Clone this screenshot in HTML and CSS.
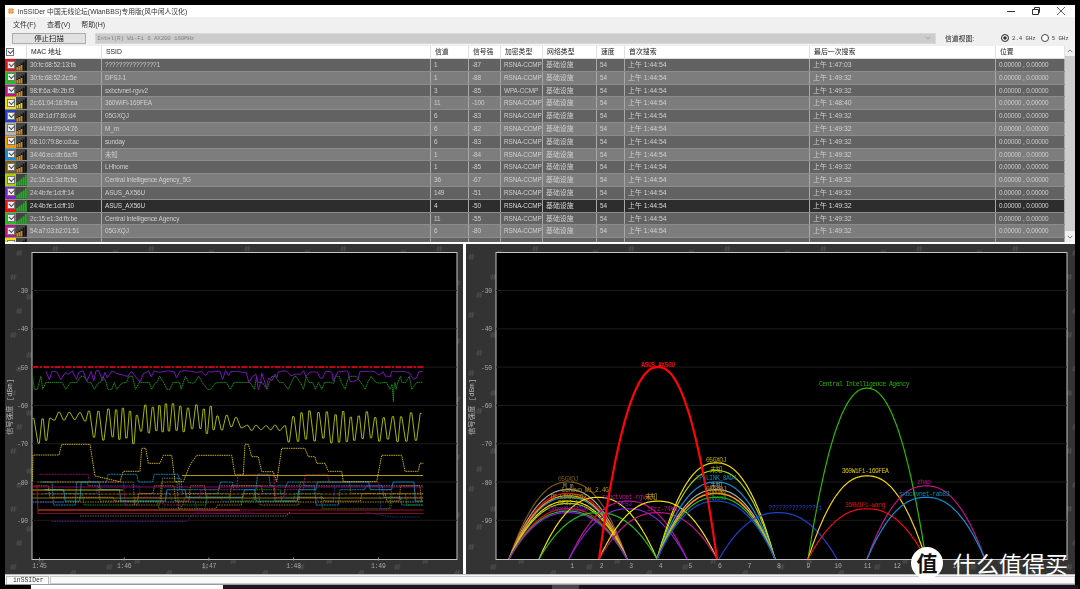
FILE: index.html
```html
<!DOCTYPE html>
<html lang="zh">
<head>
<meta charset="utf-8">
<title>inSSIDer</title>
<link rel="stylesheet" href="styles.css">
</head>
<body>
<svg class="defs" width="0" height="0" aria-hidden="true">
  <symbol id="sig" viewBox="0 0 10 11">
    <path d="M1 11V7M3 11V5.5M5 11V4M7 11V2.5M9 11V1" stroke="#111" stroke-width="1.6"/>
    <path d="M1 11V7.5M3 11V6.5M5 11V5.5" stroke="#d88a10" stroke-width="1.6"/>
  </symbol>
  <symbol id="sig-y" viewBox="0 0 10 11">
    <path d="M1 11V7M3 11V5.5M5 11V4M7 11V2.5M9 11V1" stroke="#111" stroke-width="1.6"/>
    <path d="M1 11V7.5M3 11V6.5M5 11V5.5" stroke="#e8d800" stroke-width="1.6"/>
  </symbol>
  <symbol id="sig-g" viewBox="0 0 10 11">
    <path d="M1 11V7.5M3 11V6M5 11V4.5M7 11V3M9 11V1" stroke="#12b812" stroke-width="1.6"/>
  </symbol>
</svg>

<div class="window">
  <header class="titlebar">
    <svg class="app-icon" viewBox="0 0 8 8"><path d="M2.5 0V8M5.5 0V8M0 2.5H8M0 5.5H8" stroke="#e8801a" stroke-width="1.3"/></svg>
    <span class="title">inSSIDer 中国无线论坛(WlanBBS)专用版(风中闲人汉化)</span>
    <div class="controls">
      <svg viewBox="0 0 10 10"><path d="M1 5.5H9" stroke="#333"/></svg>
      <svg viewBox="0 0 10 10"><path d="M1.5 3.5H7.5V8.5H1.5ZM3.5 3.5V1.5H8.5V6.5H7.5" fill="none" stroke="#333"/></svg>
      <svg viewBox="0 0 10 10"><path d="M1 1L9 9M9 1L1 9" stroke="#333" stroke-width=".8"/></svg>
    </div>
  </header>

  <nav class="menubar">
    <span>文件(F)</span><span>查看(V)</span><span>帮助(H)</span>
  </nav>

  <div class="toolbar">
    <button class="stop">停止扫描</button>
    <div class="select">
      <span>Intel(R) Wi-Fi 6 AX200 160MHz</span>
      <svg viewBox="0 0 8 5"><path d="M1 1L4 4L7 1" fill="none" stroke="#999"/></svg>
    </div>
    <span class="view-label">信道视图:</span>
    <label class="radio"><i class="dot on"></i>2.4 GHz</label>
    <label class="radio"><i class="dot"></i>5 GHz</label>
  </div>

  <section class="table">
    <div class="rows">
      <div class="row head">
        <span class="hcheck"><i class="cb light"></i></span><span></span>
        <span>MAC 地址</span><span>SSID</span><span>信道</span><span>信号强</span><span>加密类型</span><span>网络类型</span><span>速度</span><span>首次搜索</span><span>最后一次搜索</span><span>位置</span>
      </div>
      <div class="row odd"><span class="swatch red"><i class="cb"></i></span><svg class="sig"><use href="#sig"/></svg><span>30:fc:68:52:13:fa</span><span>???????????????1</span><span>1</span><span>-87</span><span>RSNA-CCMP</span><span>基础设施</span><span>54</span><span>上午 1:44:54</span><span>上午 1:47:03</span><span>0.00000 , 0.00000</span></div>
      <div class="row even"><span class="swatch green"><i class="cb"></i></span><svg class="sig"><use href="#sig"/></svg><span>30:fc:68:52:2c:5e</span><span>DFSJ-1</span><span>1</span><span>-88</span><span>RSNA-CCMP</span><span>基础设施</span><span>54</span><span>上午 1:44:54</span><span>上午 1:49:32</span><span>0.00000 , 0.00000</span></div>
      <div class="row odd"><span class="swatch magenta"><i class="cb"></i></span><svg class="sig"><use href="#sig"/></svg><span>98:ff:6a:4b:2b:f3</span><span>sxbctvnet-rgvv2</span><span>3</span><span>-85</span><span>WPA-CCMP</span><span>基础设施</span><span>54</span><span>上午 1:44:54</span><span>上午 1:49:32</span><span>0.00000 , 0.00000</span></div>
      <div class="row even"><span class="swatch yellow"><i class="cb"></i></span><svg class="sig"><use href="#sig-y"/></svg><span>2c:61:04:16:9f:ea</span><span>360WiFi-169FEA</span><span>11</span><span>-100</span><span>RSNA-CCMP</span><span>基础设施</span><span>54</span><span>上午 1:44:54</span><span>上午 1:48:40</span><span>0.00000 , 0.00000</span></div>
      <div class="row odd"><span class="swatch blue"><i class="cb"></i></span><svg class="sig"><use href="#sig"/></svg><span>80:8f:1d:f7:80:d4</span><span>05GXQJ</span><span>6</span><span>-83</span><span>RSNA-CCMP</span><span>基础设施</span><span>54</span><span>上午 1:44:54</span><span>上午 1:49:32</span><span>0.00000 , 0.00000</span></div>
      <div class="row even"><span class="swatch grey"><i class="cb"></i></span><svg class="sig"><use href="#sig"/></svg><span>78:44:fd:29:04:76</span><span>M_m</span><span>6</span><span>-82</span><span>RSNA-CCMP</span><span>基础设施</span><span>54</span><span>上午 1:44:54</span><span>上午 1:49:32</span><span>0.00000 , 0.00000</span></div>
      <div class="row odd"><span class="swatch orange"><i class="cb"></i></span><svg class="sig"><use href="#sig"/></svg><span>08:10:79:8e:cd:ac</span><span>sunday</span><span>6</span><span>-83</span><span>RSNA-CCMP</span><span>基础设施</span><span>54</span><span>上午 1:44:54</span><span>上午 1:49:32</span><span>0.00000 , 0.00000</span></div>
      <div class="row even"><span class="swatch cyan"><i class="cb"></i></span><svg class="sig"><use href="#sig"/></svg><span>34:46:ec:db:6a:f9</span><span>未知</span><span>1</span><span>-84</span><span>RSNA-CCMP</span><span>基础设施</span><span>54</span><span>上午 1:44:54</span><span>上午 1:49:32</span><span>0.00000 , 0.00000</span></div>
      <div class="row odd"><span class="swatch brown"><i class="cb"></i></span><svg class="sig"><use href="#sig"/></svg><span>34:46:ec:db:6a:f8</span><span>LHhome</span><span>1</span><span>-85</span><span>RSNA-CCMP</span><span>基础设施</span><span>54</span><span>上午 1:44:54</span><span>上午 1:49:32</span><span>0.00000 , 0.00000</span></div>
      <div class="row even"><span class="swatch lime"><i class="cb"></i></span><svg class="sig"><use href="#sig-g"/></svg><span>2c:15:e1:3d:fb:bc</span><span>Central Intelligence Agency_5G</span><span>36</span><span>-67</span><span>RSNA-CCMP</span><span>基础设施</span><span>54</span><span>上午 1:44:54</span><span>上午 1:49:32</span><span>0.00000 , 0.00000</span></div>
      <div class="row odd"><span class="swatch purple"><i class="cb"></i></span><svg class="sig"><use href="#sig-g"/></svg><span>24:4b:fe:1d:ff:14</span><span>ASUS_AX56U</span><span>149</span><span>-51</span><span>RSNA-CCMP</span><span>基础设施</span><span>54</span><span>上午 1:44:54</span><span>上午 1:49:32</span><span>0.00000 , 0.00000</span></div>
      <div class="row selected"><span class="swatch red"><i class="cb"></i></span><svg class="sig"><use href="#sig-g"/></svg><span>24:4b:fe:1d:ff:10</span><span>ASUS_AX56U</span><span>4</span><span>-50</span><span>RSNA-CCMP</span><span>基础设施</span><span>54</span><span>上午 1:44:54</span><span>上午 1:49:32</span><span>0.00000 , 0.00000</span></div>
      <div class="row odd"><span class="swatch green"><i class="cb"></i></span><svg class="sig"><use href="#sig-g"/></svg><span>2c:15:e1:3d:fb:be</span><span>Central Intelligence Agency</span><span>11</span><span>-55</span><span>RSNA-CCMP</span><span>基础设施</span><span>54</span><span>上午 1:44:54</span><span>上午 1:49:32</span><span>0.00000 , 0.00000</span></div>
      <div class="row even"><span class="swatch magenta"><i class="cb"></i></span><svg class="sig"><use href="#sig"/></svg><span>54:a7:03:b2:01:51</span><span>05GXQJ</span><span>6</span><span>-80</span><span>RSNA-CCMP</span><span>基础设施</span><span>54</span><span>上午 1:44:54</span><span>上午 1:49:32</span><span>0.00000 , 0.00000</span></div>
      <div class="row odd"><span class="swatch yellow"><i class="cb"></i></span><svg class="sig"><use href="#sig"/></svg><span></span><span></span><span></span><span></span><span></span><span></span><span></span><span></span><span></span><span></span></div>
    </div>
    <div class="scrollbar">
      <svg viewBox="0 0 8 5"><path d="M1 4L4 1L7 4" fill="none" stroke="#555"/></svg>
      <div class="thumb"></div>
      <svg viewBox="0 0 8 5"><path d="M1 1L4 4L7 1" fill="none" stroke="#555"/></svg>
    </div>
  </section>

  <section class="charts">
    <div class="pane time"><svg id="time-chart" viewBox="5 244 458 330"></svg></div>
    <div class="pane channel"><svg id="channel-chart" viewBox="466 244 609 330"></svg></div>
  </section>

  <footer class="tabbar">
    <span class="tab">inSSIDer</span>
    <div class="tab-rest"></div>
  </footer>
</div>

<div class="taskbar">
  <div class="task-white"></div>
  <div class="task-dark"></div>
  <div class="task-grey"></div>
  <div class="task-dark wide"></div>
</div>

<div class="brand">
  <span class="brand-mark">值</span>
  <span class="brand-name">什么值得买</span>
</div>

<script src="chart.js"></script>
</body>
</html>
```
FILE: styles.css
```css
* { box-sizing: border-box; }
html, body { margin: 0; height: 589px; overflow: hidden; background: #000; }
body {
  position: relative;
  font-family: "Liberation Sans", "Noto Sans CJK SC", sans-serif;
  font-size: 6.8px;
  color: #222;
  display: flex;
  flex-direction: column;
}
.defs { position: absolute; }
.window {
  margin: 5px 5px 0;
  height: 580px;
  flex: none;
  display: flex;
  flex-direction: column;
  background: #f0f0f0;
  filter: blur(0.3px);
}

.titlebar {
  height: 12px;
  flex: none;
  background: #fff;
  display: flex;
  align-items: center;
  padding-left: 3px;
  gap: 4px;
}
.app-icon { width: 6px; height: 6px; }
.title { flex: 1; font-size: 6.8px; color: #333; }
.controls { display: flex; gap: 15px; padding-right: 9px; }
.controls svg { width: 10px; height: 10px; }

.menubar {
  height: 14px;
  flex: none;
  display: flex;
  align-items: center;
  gap: 11px;
  padding-left: 8px;
  color: #333;
  font-size: 7px;
}

.toolbar {
  height: 15px;
  flex: none;
  display: flex;
  align-items: center;
  padding: 0 0 1px 7px;
}
.stop {
  width: 74px;
  height: 11px;
  padding: 0;
  border: 1px solid #adadad;
  background: #e1e1e1;
  font: 7.4px "Liberation Sans", "Noto Sans CJK SC", sans-serif;
  color: #222;
  line-height: 9px;
}
.select {
  margin-left: 9px;
  width: 841px;
  height: 11px;
  background: #cccccc;
  border: 1px solid #d8d8d8;
  display: flex;
  align-items: center;
  justify-content: space-between;
  padding: 0 4px 0 1px;
  font: 6px "Liberation Mono", monospace;
  letter-spacing: -0.25px;
  color: #858585;
}
.select svg { width: 6px; height: 4px; }
.view-label { margin-left: 9px; width: 56px; font-size: 6.8px; }
.radio {
  display: flex;
  align-items: center;
  gap: 3px;
  margin-right: 5px;
  font: 5.8px "Liberation Mono", monospace;
  letter-spacing: -0.1px;
  color: #444;
  white-space: nowrap;
}
.dot {
  width: 8px;
  height: 8px;
  border: 1px solid #444;
  border-radius: 50%;
  background: #fff;
}
.dot.on { background: #333; box-shadow: inset 0 0 0 1.2px #fff; }

.table {
  height: 198px;
  flex: none;
  display: flex;
  border-bottom: 2px solid #fff;
  overflow: hidden;
  background: #fff;
}
.rows { width: 1060px; overflow: hidden; }
.row {
  display: grid;
  grid-template-columns: 11px 11px 75px 329px 38px 32px 42px 54px 28px 185px 186px 69px;
  height: 12.8px;
  color: #cfcfcf;
  border-bottom: 1px solid #8c8c8c;
  font-size: 6.4px;
  letter-spacing: -0.12px;
  line-height: 12.4px;
  white-space: nowrap;
}
.row > span { padding-left: 3px; border-right: 1px solid #a8a8a8; overflow: hidden; }
.row > span:nth-child(8),
.row > span:nth-child(10),
.row > span:nth-child(11) { font-size: 6.9px; letter-spacing: 0; }
.row.odd { background: #626262; }
.row.even { background: #7d7d7d; }
.row.selected { background: #2d2d2d; color: #d8d8d8; }
.row.head {
  height: 13px;
  background: #fff;
  color: #222;
  border-bottom: 1px solid #ddd;
  font-size: 6.8px;
  letter-spacing: 0;
}
.row.head > span { border-right: 1px solid #e0e0e0; padding-left: 4px; }
.row.head > .hcheck { padding: 2px 0 0 1px; border-right: 0; }
.row.head > span:nth-child(2) { border-right: 1px solid #e0e0e0; }
.row > .swatch { padding: 1.5px 0 0 1.5px; border-right: 0; }
.cb {
  display: block;
  width: 8px;
  height: 8px;
  background: #eee;
  border: 1px solid #777;
  position: relative;
}
.cb::after {
  content: "";
  position: absolute;
  left: 1px;
  top: 0;
  width: 4px;
  height: 2.5px;
  border-left: 1px solid #444;
  border-bottom: 1px solid #444;
  transform: rotate(-45deg);
}
.cb.light { background: #fff; }
.sig { width: 11px; height: 11.8px; display: block; background: #444; }
.red { background: #f00d0d; }
.green { background: #1fc01f; }
.magenta { background: #c0128a; }
.yellow { background: #f4e000; }
.blue { background: #2040d0; }
.grey { background: #b0b0b0; }
.orange { background: #f59a12; }
.cyan { background: #1090d8; }
.brown { background: #7a5a10; }
.lime { background: #a8d000; }
.purple { background: #8020d0; }

.scrollbar {
  width: 10px;
  background: #f0f0f0;
  display: flex;
  flex-direction: column;
  align-items: center;
  justify-content: space-between;
  padding: 3px 0;
}
.scrollbar svg { width: 6px; height: 4px; flex: none; }
.thumb { width: 100%; flex: 1; margin: 3px 0 4px; background: #cdcdcd; }

.charts {
  height: 330px;
  flex: none;
  display: flex;
  gap: 3px;
  background: #fff;
}
.pane { height: 330px; background: #333; }
.pane svg { display: block; width: 100%; height: 100%; }
.pane.time { width: 458px; }
.pane.channel { width: 609px; }

.tabbar {
  height: 11px;
  flex: none;
  display: flex;
  background: #f4f4f4;
  border-top: 1px solid #bbb;
  border-bottom: 1px solid #999;
  padding: 1px 0 0 1px;
  gap: 1px;
  overflow: hidden;
}
.tab {
  width: 43px;
  background: #fff;
  border: 1px solid #bbb;
  border-bottom: 0;
  padding-left: 6px;
  font: 6.4px/7px "Liberation Mono", monospace;
  color: #333;
}
.tab-rest { flex: 1; background: #fafafa; border: 1px solid #ccc; }

.taskbar { flex: 1; display: flex; }
.task-white { width: 192px; margin-left: 31px; background: #fff; }
.task-dark { width: 329px; background: #201520; }
.task-dark.wide { width: 499px; background: #1a1220; }
.task-grey { width: 27px; background: #4a4450; }

.brand {
  position: absolute;
  left: 911px;
  top: 547px;
  display: flex;
  align-items: center;
  gap: 10px;
  color: #fff;
}
.brand-mark {
  width: 32px;
  height: 32px;
  border-radius: 50%;
  background: #fff;
  color: #111;
  text-align: center;
  font: 700 21px/31px "Noto Sans CJK SC", sans-serif;
}
.brand-name {
  font: 400 23px/32px "Noto Sans CJK SC", sans-serif;
  white-space: nowrap;
}
```
FILE: chart.js
```js
(function () {
  var NS = 'http://www.w3.org/2000/svg';
  var MONO = '"Liberation Mono","Noto Sans CJK SC",monospace';
  var PLOT_TOP = 252.5, PLOT_BOTTOM = 559.5;

  function yOf(db) { return 290.5 + (-30 - db) * 3.83; }

  function seeded(a) {
    return function () {
      a = (a + 0x6D2B79F5) | 0;
      var t = Math.imul(a ^ (a >>> 15), 1 | a);
      t = (t + Math.imul(t ^ (t >>> 7), 61 | t)) ^ t;
      return ((t ^ (t >>> 14)) >>> 0) / 4294967296;
    };
  }

  function el(parent, name, attrs, text) {
    var n = document.createElementNS(NS, name);
    for (var k in attrs) n.setAttribute(k, attrs[k]);
    if (text != null) n.textContent = text;
    parent.appendChild(n);
    return n;
  }

  function axisText(svg, x, y, s, anchor) {
    el(svg, 'text', { x: x, y: y, 'text-anchor': anchor, fill: '#a8a8a8', 'font-size': 6.4, 'letter-spacing': -0.2, 'font-family': MONO }, s);
  }

  function frame(svg, id, x0, x1, yTitleX) {
    var defs = el(svg, 'defs', {});
    var pat = el(defs, 'pattern', { id: id, width: 96, height: 58, patternUnits: 'userSpaceOnUse', patternTransform: 'translate(5 244)' });
    [[12, 6], [48, 2], [80, 10], [6, 30], [34, 24], [66, 36], [22, 50], [88, 48]].forEach(function (p) {
      var x = p[0], y = p[1];
      el(pat, 'path', {
        d: 'M' + (x + 1.6) + ' ' + y + 'l-1 6M' + (x + 4) + ' ' + y + 'l-1 6M' + (x - .5) + ' ' + (y + 2) + 'h6M' + (x - 1) + ' ' + (y + 4) + 'h6',
        stroke: '#4b4b4b', 'stroke-width': 1, fill: 'none'
      });
    });
    el(svg, 'rect', { x: 0, y: 244, width: 1080, height: 330, fill: 'url(#' + id + ')' });
    el(svg, 'rect', { x: x0, y: PLOT_TOP, width: x1 - x0, height: PLOT_BOTTOM - PLOT_TOP, fill: '#000', stroke: '#c4c4c4', 'stroke-width': 1 });
    for (var db = -30; db >= -90; db -= 10) {
      var y = yOf(db);
      el(svg, 'path', { d: 'M' + x0 + ' ' + y + 'H' + x1, stroke: '#1c1c1c', 'stroke-width': 1 });
      axisText(svg, x0 - 4, y + 2.6, String(db), 'end');
    }
    var cy = 407;
    el(svg, 'text', {
      x: yTitleX, y: cy, 'text-anchor': 'middle', fill: '#b0b0b0', 'font-size': 7.4, 'font-family': MONO,
      transform: 'rotate(-90 ' + yTitleX + ' ' + cy + ')'
    }, '信号强度 [dBm]');
  }

  function line(svg, pts, color, w, dash) {
    var a = { points: pts.map(function (p) { return p[0].toFixed(1) + ',' + p[1].toFixed(1); }).join(' '), fill: 'none', stroke: color, 'stroke-width': w, 'stroke-linejoin': 'round' };
    if (dash) a['stroke-dasharray'] = dash;
    el(svg, 'polyline', a);
  }

  /* ---------- time chart ---------- */
  function wave(rnd, segs, from) {
    var pts = [], x = from, hi = true;
    segs.forEach(function (s) {
      while (x < s[0]) {
        var a = s[1] + rnd() * (s[2] - s[1]) * 0.22;
        var b = s[2] - rnd() * (s[2] - s[1]) * 0.22;
        var y = hi ? a : b;
        pts.push([x, 350 + y / 3]);
        x += 1.4;
        pts.push([x, 350 + y / 3]);
        x += (s[3] || 2.5) * (0.7 + rnd() * 0.7);
        hi = !hi;
      }
    });
    return pts;
  }

  function steps(rnd, levels, x0, x1, minHold, maxHold) {
    var pts = [], x = x0, lv = levels[0];
    while (x < x1) {
      pts.push([x, yOf(lv)]);
      x += minHold + rnd() * (maxHold - minHold);
      if (x > x1) x = x1;
      pts.push([x, yOf(lv)]);
      lv = levels[Math.floor(rnd() * levels.length)];
      x += 1.5;
    }
    return pts;
  }

  function drawTime(svg) {
    frame(svg, 'bg-time', 32, 457, 12);
    var rnd = seeded(77);
    var X0 = 32.5, X1 = 423;

    ['1:45', '1:46', '1:47', '1:48', '1:49'].forEach(function (t, i) {
      var x = 39.5 + i * 84.7;
      el(svg, 'path', { d: 'M' + x + ' 557.5V560.5', stroke: '#999' });
      axisText(svg, x, 568, t, 'middle');
    });

    /* stepping weak signals */
    [
      ['#1088b8', [-80, -81, -82, -84, -86, -78], 10, 34, '2 .6'],
      ['#808080', [-80, -79, -81, -83, -85], 10, 40, '1.5 1'],
      ['#a01080', [-78, -80, -84, -86, -82], 8, 30, '2 1'],
      ['#1040b0', [-83, -85, -87, -81, -84], 8, 36, '1.5 .8'],
      ['#109010', [-82, -85, -87, -83, -86], 10, 30, '1.5 .8'],
      ['#c07810', [-81, -84, -87, -83, -85], 10, 30, '1.5 .8'],
      ['#1088b8', [-82, -84, -85, -80], 7, 22, ''],
      ['#8a7a10', [-80, -83, -86, -87], 12, 40, '1.5 1']
    ].forEach(function (s) {
      line(svg, steps(rnd, s[1], X0 + rnd() * 20, X1, s[2], s[3]), s[0], 0.9, s[4]);
    });

    line(svg, [[52, 521.5], [187, 521.5], [195, 512], [255, 512]], '#5a10b0', 0.8, '1.5 1');
    line(svg, [[80, 516], [286, 516], [290, 512]], '#888', 0.7, '1.5 1');
    line(svg, [[365, 512], [391, 517], [420, 517]], '#1040b0', 0.7, '1.5 1');

    /* flat levels */
    line(svg, [[X0, 490], [123, 490]], '#d8c000', 0.9);
    line(svg, [[X0, 494], [X1, 494]], '#c07810', 0.8, '3 1');
    line(svg, [[X0, 498], [X1, 498]], '#a89810', 0.8);
    line(svg, [[X0, 502], [X1, 502]], '#c0a000', 0.8, '1.5 1');
    line(svg, [[X0, 502], [64, 502]], '#1040c0', 0.9);
    line(svg, [[38, 510], [240, 510]], '#c06a10', 1.2);
    line(svg, [[44, 510], [X1, 510]], '#b00820', 1.1);
    line(svg, [[38, 513.5], [X1, 513.5]], '#90102a', 0.9);
    line(svg, [[X0, 487], [X1, 487]], '#a0107a', 0.8);
    line(svg, [[182, 475.5], [X1, 475.5]], '#c0b000', 0.9);
    line(svg, [[32.5, 486], [37, 486], [38, 513.5]], '#c01010', 0.9);

    /* yellow staircase */
    var stair = [[97, 395], [99, 315], [177, 315], [185, 283], [270, 283], [285, 378], [360, 395], [370, 364], [420, 364], [425, 295], [437, 295], [445, 340], [480, 340], [490, 316], [515, 316], [525, 395], [550, 395], [570, 345], [590, 316], [695, 316], [705, 375], [730, 375], [735, 283], [745, 283], [755, 320], [775, 320], [785, 365], [820, 365], [830, 395], [845, 295], [915, 295], [925, 320], [945, 320], [950, 340], [975, 340], [985, 364], [1025, 364], [1030, 395], [1130, 395], [1145, 316], [1205, 316], [1215, 364], [1255, 364], [1260, 340], [1270, 340]];
    line(svg, stair.map(function (p) { return [p[0] / 3, 350 + p[1] / 3]; }), '#c8b400', 1, '1.5 .8');

    /* olive square wave */
    var olive = wave(rnd, [[52, 200, 290, 3], [93, 182, 215, 3], [140, 172, 285, 2.6], [210, 160, 255, 2.1], [243, 192, 240, 3.2], [287, 224, 242, 3], [424, 180, 285, 2.8]], X0);
    line(svg, olive, '#a8b400', 1);

    /* green dotted */
    var g = [], x = X0, v;
    while (x < X1) {
      v = -54 - (rnd() < 0.3 ? 1.8 : 0) + (rnd() < 0.3 ? 1.6 : 0);
      g.push([x, yOf(v)]);
      x += 1.5 + rnd() * 3.5;
    }
    g.push([392, yOf(-54.5)], [393.5, yOf(-59)], [395, yOf(-54)], [X1, yOf(-54)]);
    g.sort(function (a, b) { return a[0] - b[0]; });
    line(svg, g, '#1f9a1f', 0.9, '1.5 .5');

    /* purple */
    var p = [], px = 46;
    while (px < X1) {
      var deep = (px > 243 && px < 278) ? 4.5 : (rnd() < 0.45 ? 2.5 : 0.4);
      p.push([px, yOf(-50.5 - deep * rnd() * 1.2 - 0.4)]);
      px += 1.4 + rnd() * 3.5;
    }
    line(svg, p, '#7a10b8', 1);

    /* red dash-dot */
    line(svg, [[X0, yOf(-50)], [X1, yOf(-50)]], '#ff0505', 1.5, '6 1.5 2 1.5');
  }

  /* ---------- channel chart ---------- */
  var PEAK = { 1: 568, 2: 598, 3: 628, 4: 658, 6: 716, 8: 778, 11: 867, 13: 926 };
  function chX(c) { return 572 + (c - 1) * 29.55; }

  function curve(svg, c, db, color, w) {
    var cx = PEAK[c], half = 59, bottom = 559, h = bottom - yOf(db), pts = [];
    var strong = h > 100;
    for (var i = -60; i <= 60; i++) {
      var t = Math.abs(i / 60);
      var arch = 1 - Math.pow(t, strong ? 2.2 : 2.6);
      var bell = 0.5 + 0.5 * Math.cos(Math.PI * t);
      var v = strong ? arch : arch * 0.85 + bell * 0.15;
      pts.push([cx + (i / 60) * half, bottom - h * v]);
    }
    line(svg, pts, color, w);
  }

  function drawChannel(svg) {
    frame(svg, 'bg-chan', 496, 1067, 474);

    for (var c = 1; c <= 14; c++) axisText(svg, chX(c), 568, String(c), 'middle');

    var curves = [
      [1, -80, '#7a5a10', 1.2], [1, -82, '#a8a8a8', 1.2], [1, -83, '#f50f0f', 1.2], [1, -84, '#1090d8', 1.2],
      [1, -83.6, '#f59a12', 1.2], [1, -85, '#f4e000', 1.2], [1, -85.6, '#a8d000', 1.2], [1, -87, '#f00d0d', 1.2],
      [1, -87.6, '#1fc01f', 1.2], [1, -88, '#8020d0', 1.2],
      [2, -84, '#f4e000', 1.2], [2, -88, '#1fc01f', 1.2],
      [3, -85, '#c0128a', 1.2], [3, -87, '#8020d0', 1.2],
      [4, -85, '#f4e000', 1.2], [4, -88, '#c0128a', 1.2],
      [6, -75, '#f4e000', 1.2], [6, -77, '#a8d000', 1.2], [6, -80, '#1090d8', 1.2], [6, -82, '#b0b0b0', 1.2],
      [6, -83, '#f59a12', 1.6], [6, -84, '#1fc01f', 1.2], [6, -85, '#2040d0', 1.2],
      [8, -88, '#2040d0', 1.2],
      [11, -55.5, '#2db800', 1.2], [11, -78.4, '#f4d800', 1.2], [11, -87, '#f00d0d', 1.2],
      [13, -81, '#c0128a', 1.2], [13, -84, '#1090d8', 1.2],
      [4, -50, '#ff0505', 2.2]
    ];

    var clipDefs = el(svg, 'defs', {});
    var clip = el(clipDefs, 'clipPath', { id: 'plot-clip' });
    el(clip, 'rect', { x: 496, y: PLOT_TOP, width: 571, height: PLOT_BOTTOM - PLOT_TOP });
    var g = el(svg, 'g', { 'clip-path': 'url(#plot-clip)' });
    curves.forEach(function (k) { curve(g, k[0], k[1], k[2], k[3]); });

    [
      ['ASUS_AX56U', 658, 367, '#f00d0d', 700],
      ['Central Intelligence Agency', 864, 386, '#2db000'],
      ['360WiFi-169FEA', 865, 473, '#d8c000'],
      ['360WiFi-wang', 865, 507, '#e00d0d'],
      ['zhao', 924, 484, '#b0107a'],
      ['sxbctvnet-rab83', 924, 496, '#1088b0'],
      ['05GXQJ', 716, 462, '#b8a810'],
      ['未知', 716, 472, '#a8c000'],
      ['TP-LINK_8A94', 716, 480, '#1088b0'],
      ['未知', 716, 488, '#a0a0a0'],
      ['05GXQJ', 716, 491, '#c08010'],
      ['sunday', 716, 494, '#b89010'],
      ['LHhome', 716, 500, '#108a30'],
      ['???????????????1', 795, 510, '#2040d0'],
      ['05GXQJ', 568, 481, '#7a5a10'],
      ['M_m', 568, 488, '#909090'],
      ['Lenovo_Wi_2.4G', 585, 492, '#b09000'],
      ['TP-LINK8892', 568, 499, '#a0a000'],
      ['DFSJ-1', 568, 505, '#a8a810'],
      ['sxbgd8ed3990', 568, 511, '#8020c0'],
      ['sxbctvnet-rgvv2', 627, 499, '#c0128a'],
      ['未知', 651, 499, '#c8b000'],
      ['DFSJ', 625, 506, '#8020c0'],
      ['ifrz-74KB', 662, 511, '#c0128a']
    ].forEach(function (l) {
      el(svg, 'text', { x: l[1], y: l[2], 'text-anchor': 'middle', fill: l[3], 'font-size': 6.4, 'letter-spacing': -0.5, 'font-weight': l[4] || 400, 'font-family': MONO }, l[0]);
    });
  }

  drawTime(document.getElementById('time-chart'));
  drawChannel(document.getElementById('channel-chart'));
})();
```
